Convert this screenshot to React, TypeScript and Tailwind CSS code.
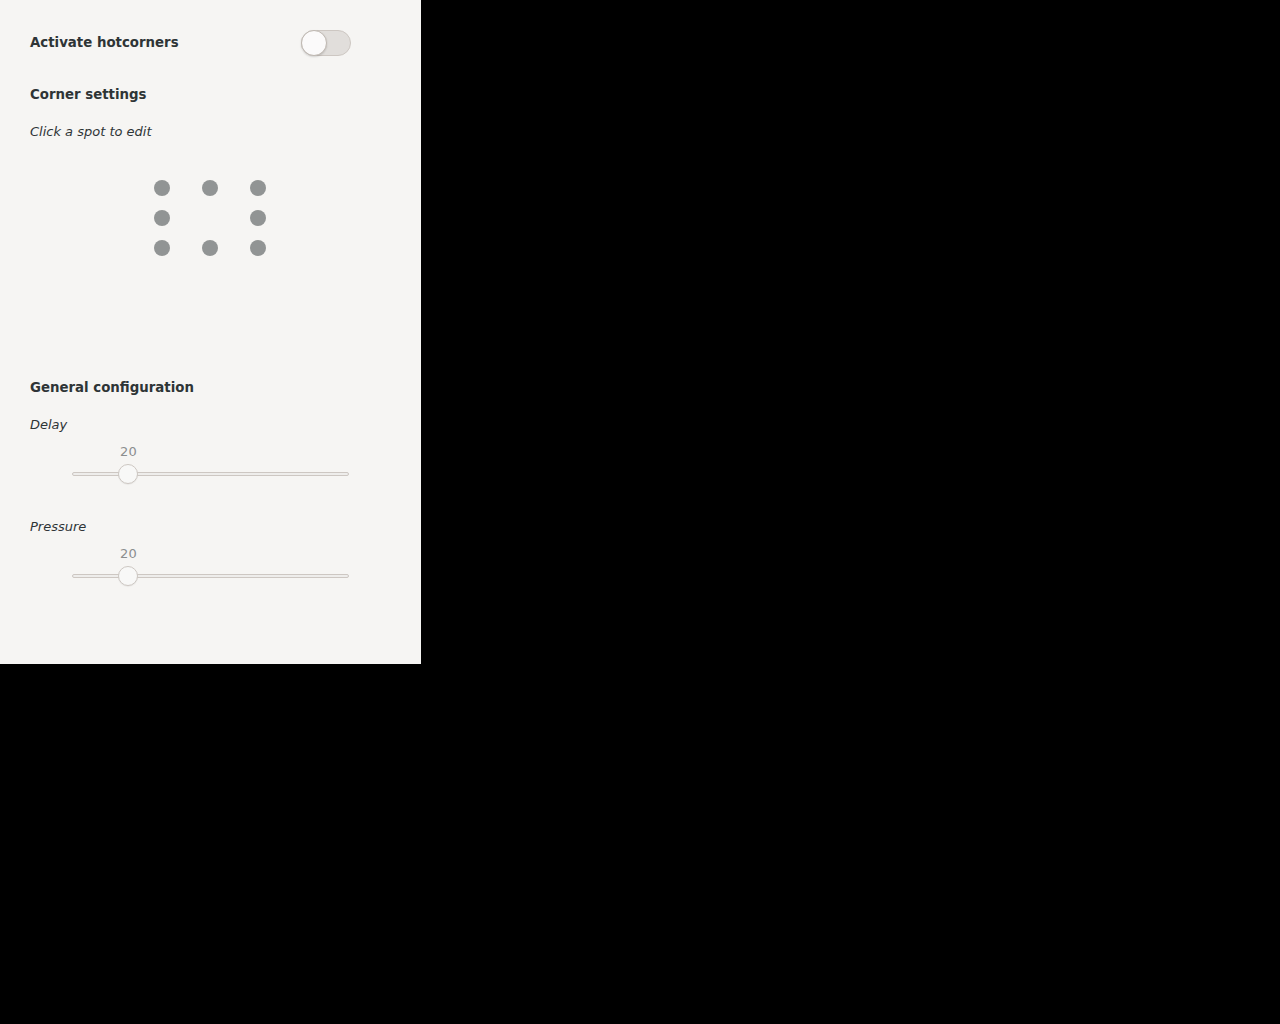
import React from "react";

const font = { fontFamily: '"DejaVu Sans", sans-serif' };

function Slider({ value }: { value: number }) {
  const x = (value / 100) * 277 + 1;
  return (
    <div className="relative ml-[42px] w-[277px]">
      <div className="relative h-[16px] w-[277px] text-[13px] leading-[16px] text-[#8b8e8f]">
        <span className="absolute -translate-x-1/2" style={{ left: `${x}px` }}>
          {value}
        </span>
      </div>
      <div className="relative mt-[4px] flex h-[20px] items-center">
        <div className="h-[4px] w-full rounded-full border border-[#cdc7c2] bg-[#eeedeb]" />
        <div
          className="absolute top-0 h-[20px] w-[20px] -translate-x-1/2 rounded-full border border-[#cdc7c2] bg-[#f8f8f7] shadow-[0_1px_1px_rgba(0,0,0,0.05)]"
          style={{ left: `${x}px` }}
        />
      </div>
    </div>
  );
}

export default function App() {
  const dots = [1, 1, 1, 1, 0, 1, 1, 1, 1];
  return (
    <div className="min-h-[1024px] w-[1280px] bg-black" style={font}>
      <div className="flex h-[664px] w-[421px] flex-col bg-[#f6f5f3] px-[30px] text-[13px] text-[#2e3436]">
        <div className="mt-[30px] flex w-[321px] items-center justify-between">
          <span className="text-[13.333px] font-bold leading-[16px]">Activate hotcorners</span>
          <div className="relative h-[26px] w-[50px] rounded-full border border-[#cdc7c2] bg-[#e1dedb]">
            <div className="absolute left-[-1px] top-[-1px] h-[26px] w-[26px] rounded-full border border-[#bfb8b1] bg-[#fbfafa] shadow-[0_1px_2px_rgba(0,0,0,0.15)]" />
          </div>
        </div>
        <div className="mt-[31px] text-[13.333px] font-bold leading-[16px]">Corner settings</div>
        <div className="mt-[21px] italic leading-[16px]">Click a spot to edit</div>
        <div className="ml-[124px] mt-[40px] grid w-[112px] grid-cols-3 gap-x-[32px] gap-y-[14px]">
          {dots.map((d, i) => (
            <div key={i} className={`h-[16px] w-[16px] rounded-full ${d ? "bg-[#919494]" : "bg-transparent"}`} />
          ))}
        </div>
        <div className="mt-[124px] text-[13.333px] font-bold leading-[16px]">General configuration</div>
        <div className="mt-[21px] italic leading-[16px]">Delay</div>
        <div className="mt-[11px]">
          <Slider value={20} />
        </div>
        <div className="mt-[35px] italic leading-[16px]">Pressure</div>
        <div className="mt-[11px]">
          <Slider value={20} />
        </div>
      </div>
    </div>
  );
}
